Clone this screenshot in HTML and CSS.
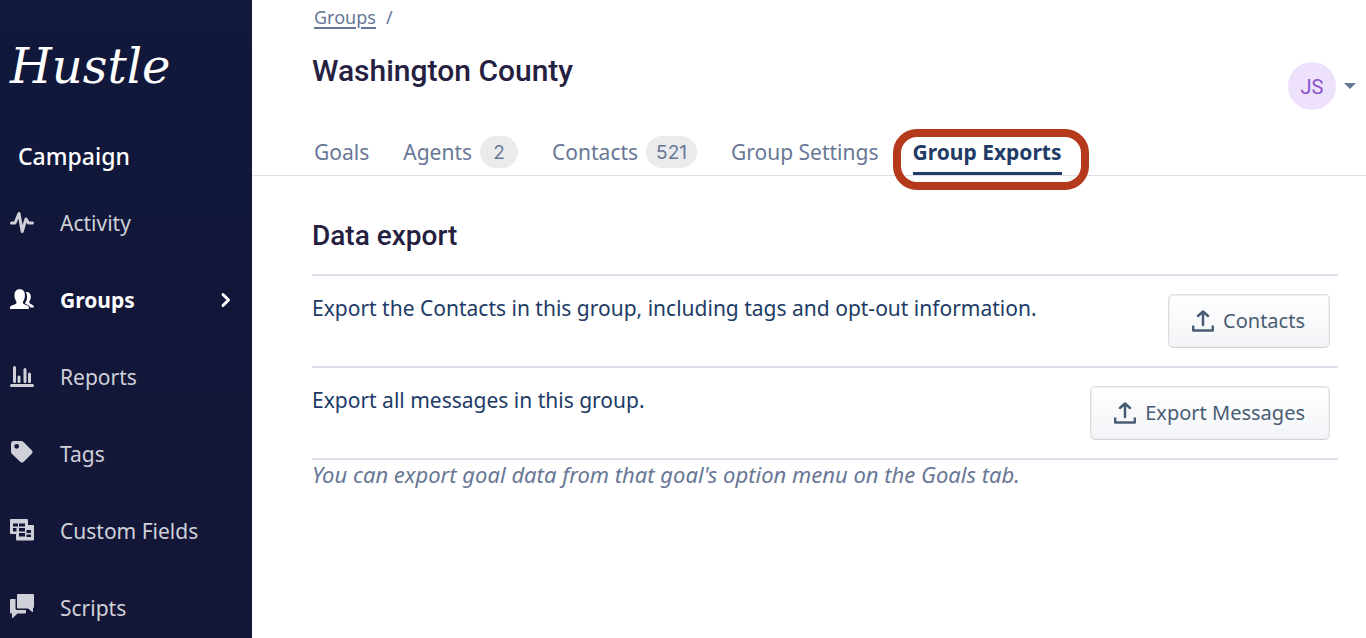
FILE: index.html
```html
<!DOCTYPE html>
<html lang="en">
<head>
<meta charset="utf-8">
<title>Washington County - Group Exports</title>
<link rel="stylesheet" href="styles.css">
</head>
<body>
<div class="app">
  <aside class="sidebar">
    <div class="logo">Hustle</div>
    <div class="section">Campaign</div>
    <nav class="nav">
      <a class="nav-item" href="#"><svg class="icon" viewBox="0 0 24 24"><path d="M1.500 12H5L9 2.500l3.200 18L16 8l2.500 4h4" fill="none" stroke="currentColor" stroke-width="3" stroke-linecap="round" stroke-linejoin="round"/></svg><span>Activity</span></a>
      <a class="nav-item active" href="#"><svg class="icon" viewBox="0 0 24 24"><path fill="currentColor" d="M0 21v-1.500c0-2.500 5.500-2.500 6.500-4.500.3-1-.6-2-1-3-.8-1.500-1-3-1-5C4.500 3 6.500 1.200 9.700 1.200s5.200 1.800 5.200 5.800c0 2-.2 3.500-1 5-.4 1-1.300 2-1 3 1 2 6 2 6 4.500V21z"/><path fill="currentColor" d="M15.500 4c3.300-.2 5.300 1.200 5.300 4.500 0 2-.3 3-1.100 4.300-.6 1-.6 1.800 0 2.500 1.300 1.200 4.300 1.700 4.300 4.200h-3.600c-1.200-2.300-3.700-2.800-5.400-4 0-1 1.200-2 1.600-3.500.8-3 .7-5.700-1.100-8z"/></svg><span>Groups</span><svg class="chevron" viewBox="0 0 12 16"><path d="M3 2.500 8.500 8 3 13.500" fill="none" stroke="currentColor" stroke-width="3" stroke-linecap="round" stroke-linejoin="round"/></svg></a>
      <a class="nav-item" href="#"><svg class="icon" viewBox="0 0 24 24"><path d="M4.500 2.500v14M9 12v4.500M15 4.500v12M19.500 9v7.500" stroke="currentColor" stroke-width="3" stroke-linecap="round"/><path d="M1.500 20.500h21" stroke="currentColor" stroke-width="3" stroke-linecap="round"/></svg><span>Reports</span></a>
      <a class="nav-item" href="#"><svg class="icon" viewBox="0 0 24 24"><path fill="currentColor" fill-rule="evenodd" d="M1 2q0-3 3-3h7q1.500 0 2.500 1L22 8.500q1.300 1.500 0 3L13.500 20q-1.500 1.200-3 0L2 12q-1-1-1-2.500zm3.300 2.300a2.400 2.400 0 1 0 4.800 0 2.400 2.400 0 1 0-4.800 0z"/></svg><span>Tags</span></a>
      <a class="nav-item" href="#"><svg class="icon" viewBox="0 0 24 24"><path fill="currentColor" fill-rule="evenodd" d="M1 0h16q1 0 1 1v5h5q1 0 1 1v13.500q0 1-1 1H7q-1 0-1-1V15H1q-1 0-1-1V1q0-1 1-1zm2 4.500v3h5v-3zm6 0v3h6v-3zM3 9v3.500h3.500V9zm6 0v3.500h6V9zm0 5v3.500h6V14zm7.500-3v3H21v-3zm0 4.500v2.500H21v-2.500z"/></svg><span>Custom Fields</span></a>
      <a class="nav-item" href="#"><svg class="icon" viewBox="0 0 24 24"><path fill="currentColor" d="M8-2h15q1 0 1 1v12q0 1-1 1v3.500q0 1-1 .3L18 12.500H8q-1 0-1-1V-1q0-1 1-1z"/><path fill="currentColor" d="M1 3h4.500v9.500Q5.500 14 7 14h9v2.500q0 1-1 1H7.500L3 21.800q-1 .5-1-.5V17.500H1q-1 0-1-1V4q0-1 1-1z"/></svg><span>Scripts</span></a>
    </nav>
  </aside>
  <main class="main">
    <header class="header">
      <div class="heading">
        <div class="crumbs"><a href="#">Groups</a><span>/</span></div>
        <h1>Washington County</h1>
      </div>
      <button class="account" type="button" aria-label="Account menu"><span class="avatar">JS</span><svg class="caret" viewBox="0 0 12 6"><path fill="currentColor" d="M0 0h12L6 6z"/></svg></button>
    </header>
    <nav class="tabs">
      <a class="tab" href="#">Goals</a>
      <a class="tab" href="#">Agents<span class="count">2</span></a>
      <a class="tab" href="#">Contacts<span class="count">521</span></a>
      <a class="tab" href="#">Group Settings</a>
      <a class="tab current" href="#">Group Exports</a>
    </nav>
    <section class="content">
      <h2>Data export</h2>
      <div class="row">
        <p>Export the Contacts in this group, including tags and opt-out information.</p>
        <button class="button" type="button"><svg class="upload" viewBox="0 0 22 22"><path d="M11 15V2.500M6 6l5-4.500L16 6" fill="none" stroke="currentColor" stroke-width="2.500" stroke-linecap="round" stroke-linejoin="round"/><path d="M1.200 15.500v5h19.600v-5" fill="none" stroke="currentColor" stroke-width="2.400" stroke-linejoin="round"/></svg>Contacts</button>
      </div>
      <div class="row">
        <p>Export all messages in this group.</p>
        <button class="button" type="button"><svg class="upload" viewBox="0 0 22 22"><path d="M11 15V2.500M6 6l5-4.500L16 6" fill="none" stroke="currentColor" stroke-width="2.500" stroke-linecap="round" stroke-linejoin="round"/><path d="M1.200 15.500v5h19.600v-5" fill="none" stroke="currentColor" stroke-width="2.400" stroke-linejoin="round"/></svg>Export Messages</button>
      </div>
      <p class="note">You can export goal data from that goal's option menu on the Goals tab.</p>
    </section>
  </main>
</div>
</body>
</html>
```
FILE: styles.css
```css
* { box-sizing: border-box; }
body { margin: 0; background: #fff; color: #213b66; font-family: "Noto Sans", sans-serif; font-size: 21px; line-height: 28px; }
a { color: inherit; text-decoration: none; }
h1, h2, p { margin: 0; }
.app { display: flex; height: 100vh; overflow: hidden; }
.sidebar { flex: 0 0 252px; background: linear-gradient(#10183b, #141637); color: #fff; padding: 34px 0 0 10px; overflow: hidden; }
.logo { font: italic 48px/64px "DejaVu Serif", serif; }
.section { padding: 44px 8px 14px; font-size: 23px; font-weight: 500; }
.nav-item { display: flex; align-items: center; height: 77px; color: #d0d1d8; }
.nav-item.active { color: #fff; font-weight: 700; }
.icon { width: 24px; height: 24px; margin-right: 26px; overflow: visible; }
.chevron { width: 12px; height: 16px; margin: 0 20px 0 auto; }
.main { flex: 1; min-width: 0; }
.header { display: flex; justify-content: space-between; padding: 3px 10px 0 60px; height: 132px; }
.crumbs { display: flex; gap: 10px; padding-left: 2px; font-size: 18px; color: #687796; }
.crumbs a { text-decoration: underline; text-decoration-thickness: 2px; text-underline-offset: 3px; }
h1 { margin-top: 20px; font: 500 30px/40px Roboto, sans-serif; color: #25203f; }
.account { display: flex; align-items: center; align-self: flex-start; gap: 8px; margin-top: 59px; padding: 0; border: 0; background: none; color: #687796; }
.avatar { width: 48px; height: 48px; border-radius: 50%; background: #ede1fc; color: #8a55ca; font: 20px/50px Roboto, sans-serif; }
.caret { width: 12px; height: 6px; }
.tabs { display: flex; gap: 34px; height: 44px; padding-left: 62px; border-bottom: 1px solid #dcdfe8; color: #687796; }
.tab { display: flex; align-items: center; height: 43px; padding-bottom: 3px; white-space: nowrap; }
.count { height: 32px; margin-left: 8px; padding: 0 10px; min-width: 38px; border-radius: 16px; background: #e9ebed; font: 19px/34px Inter, sans-serif; text-align: center; }
.current { position: relative; color: #213b66; font-weight: 700; border-bottom: 3px solid #213b66; padding-bottom: 0; }
.current::after { content: ""; position: absolute; inset: -3px -27px -18px -20px; border: 8px solid #b5391b; border-radius: 24px; }
.content { padding: 40px 28px 0 60px; }
h2 { font: 500 28px/40px Roboto, sans-serif; color: #25203f; padding-bottom: 18px; border-bottom: 2px solid #dcdfea; }
.row { display: flex; justify-content: space-between; gap: 20px; height: 92px; padding: 18px 8px 0 0; border-bottom: 2px solid #dcdfea; }
.button { display: flex; align-items: center; gap: 9px; height: 54px; padding: 0 24px 0 23px; border: 1px solid #dcdfe2; border-bottom-color: #cfd3d7; box-shadow: inset 0 0 0 1px #eceef0; border-radius: 5px; background: linear-gradient(#fff, #f3f4f7); color: #485c73; font: inherit; font-size: 20px; white-space: nowrap; }
.upload { width: 22px; height: 22px; }
.note { font-size: 22px; font-style: italic; color: #687796; }
```
